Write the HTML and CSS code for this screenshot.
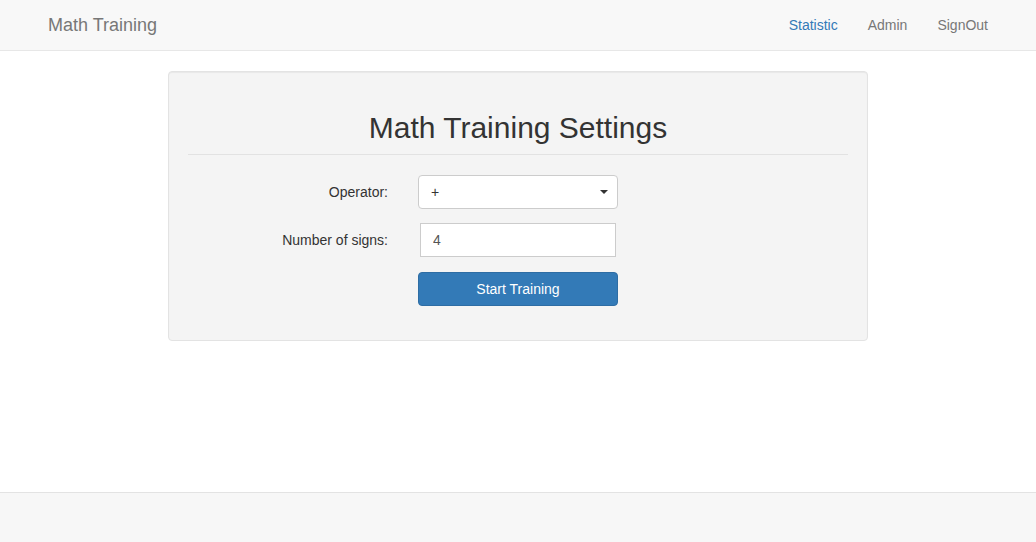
FILE: index.html
```html
<!DOCTYPE html>
<html lang="en">
<head>
<meta charset="utf-8">
<title>Math Training</title>
<link rel="stylesheet" href="styles.css">
</head>
<body>
<nav class="navbar">
  <div class="container nav-inner">
    <a class="brand" href="#">Math Training</a>
    <ul class="nav-links">
      <li><a class="active" href="#">Statistic</a></li>
      <li><a href="#">Admin</a></li>
      <li><a href="#">SignOut</a></li>
    </ul>
  </div>
</nav>
<main class="main">
  <div class="well">
    <h2 class="title">Math Training Settings</h2>
    <div class="divider"></div>
    <form class="settings">
      <label class="label" for="op">Operator:</label>
      <div class="select-wrap">
        <select id="op" class="select">
          <option>+</option>
          <option>-</option>
          <option>*</option>
          <option>/</option>
        </select>
      </div>
      <label class="label" for="num">Number of signs:</label>
      <input id="num" class="input" type="text" value="4">
      <span></span>
      <button type="button" class="btn">Start Training</button>
    </form>
  </div>
</main>
<footer class="footer"></footer>
</body>
</html>
```

FILE: styles.css
```css
* { box-sizing: border-box; }
html, body { height: 100%; }
body {
  margin: 0;
  font-family: "Liberation Sans", Arial, sans-serif;
  font-size: 14px;
  line-height: 20px;
  color: #333;
  background: #fff;
  display: flex;
  flex-direction: column;
  min-height: 100vh;
}
.navbar {
  background: #f8f8f8;
  border-bottom: 1px solid #e7e7e7;
  height: 51px;
  flex: none;
}
.container {
  width: 970px;
  margin: 0 auto;
  padding: 0 15px;
}
.nav-inner {
  display: flex;
  justify-content: space-between;
  align-items: flex-start;
}
.brand {
  font-size: 18px;
  line-height: 20px;
  padding: 15px 0;
  color: #777;
  text-decoration: none;
}
.nav-links {
  list-style: none;
  display: flex;
  margin: 0 -15px 0 0;
  padding: 0;
}
.nav-links a {
  display: block;
  padding: 15px;
  color: #777;
  text-decoration: none;
}
.nav-links a.active { color: #337ab7; }
.main {
  flex: 1;
  padding-top: 20px;
}
.well {
  width: 700px;
  margin: 0 auto;
  background: #f4f4f4;
  border: 1px solid #e3e3e3;
  border-radius: 4px;
  padding: 19px;
  box-shadow: inset 0 1px 1px rgba(0,0,0,.05);
}
.title {
  margin: 20px 0 10px;
  font-size: 30px;
  line-height: 33px;
  font-weight: 500;
  text-align: center;
  color: #333;
}
.divider {
  height: 1px;
  background: #e2e2e2;
}
.settings {
  margin: 20px 0 15px;
  display: grid;
  grid-template-columns: 200px 200px;
  column-gap: 30px;
  row-gap: 14px;
  align-items: center;
}
.label {
  text-align: right;
  line-height: 20px;
}
.select-wrap {
  position: relative;
  height: 34px;
}
.select-wrap::after {
  content: "";
  position: absolute;
  right: 10px;
  top: 15px;
  border-left: 4px solid transparent;
  border-right: 4px solid transparent;
  border-top: 4px solid #333;
  pointer-events: none;
}
.select {
  appearance: none;
  -webkit-appearance: none;
  width: 200px;
  height: 34px;
  padding: 6px 12px;
  font: inherit;
  color: #333;
  background: #fff;
  border: 1px solid #ccc;
  border-radius: 4px;
}
.input {
  width: 196px;
  height: 34px;
  margin-left: 2px;
  padding: 6px 12px;
  font: inherit;
  color: #555;
  background: #fff;
  border: 1px solid #ccc;
  border-radius: 0;
}
.btn {
  width: 200px;
  height: 34px;
  margin-top: 1px;
  font: inherit;
  color: #fff;
  background: #337ab7;
  border: 1px solid #2e6da4;
  border-radius: 4px;
}
.footer {
  flex: none;
  height: 50px;
  background: #f7f7f7;
  border-top: 1px solid #e3e3e3;
}
```
